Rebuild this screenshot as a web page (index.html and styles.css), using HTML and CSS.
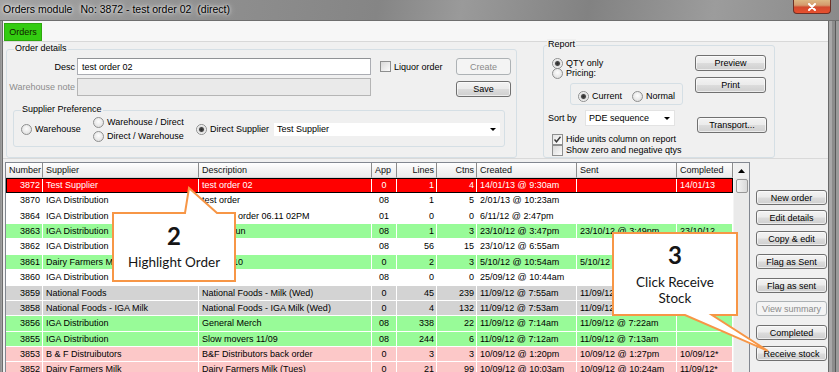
FILE: index.html
```html
<!DOCTYPE html>
<html>
<head>
<meta charset="utf-8">
<title>Orders module</title>
<link rel="stylesheet" href="styles.css">
</head>
<body>
<div class="window">
  <div class="titlebar">
    <span class="title">Orders module</span><span class="title t2">No: 3872 - test order 02</span><span class="title t3">(direct)</span>
    <div class="close"><svg width="8" height="8" viewBox="0 0 8 8"><path d="M1 1 L7 7 M7 1 L1 7" stroke="#fff" stroke-width="2" stroke-linecap="round"/></svg></div>
  </div>
  <div class="frame">
    <div class="frame-left"></div>
    <div class="content">
      <div class="tabstrip"><div class="tab">Orders</div></div>
      <div class="toppanel">
        <div class="grp od">
          <span class="grp-title">Order details</span>
          <div class="od-grid">
            <span class="lbl">Desc</span>
            <div class="input">test order 02</div>
            <div class="chkrow liquor"><span class="chk"></span><span>Liquor order</span></div>
            <div class="btn disabled">Create</div>
            <span class="lbl dim">Warehouse note</span>
            <div class="input disabled"></div>
            <span></span>
            <div class="btn save">Save</div>
          </div>
          <div class="grp sp">
            <span class="grp-title">Supplier Preference</span>
            <div class="sp-row">
              <span class="opt wh"><span class="radio"></span><span>Warehouse</span></span>
              <span class="opt-stack">
                <span class="opt"><span class="radio"></span><span>Warehouse / Direct</span></span>
                <span class="opt"><span class="radio"></span><span>Direct / Warehouse</span></span>
              </span>
              <span class="opt ds"><span class="radio on"></span><span>Direct Supplier</span></span>
              <div class="select sup"><span>Test Supplier</span><span class="caret"></span></div>
            </div>
          </div>
        </div>
        <div class="grp rp">
          <span class="grp-title">Report</span>
          <div class="rp-body">
            <div class="rp-left">
              <span class="opt r1"><span class="radio on"></span><span>QTY only</span></span>
              <span class="opt r2"><span class="radio"></span><span>Pricing:</span></span>
              <div class="inner">
                <span class="opt cur"><span class="radio on"></span><span>Current</span></span>
                <span class="opt"><span class="radio"></span><span>Normal</span></span>
              </div>
              <div class="sortrow"><span class="sortlbl">Sort by</span><div class="select sortsel"><span>PDE sequence</span><span class="caret"></span></div></div>
              <div class="chkrow c1"><span class="chk on"><svg width="9" height="9" viewBox="0 0 9 9"><path d="M1.5 4.5 L3.5 6.8 L7.5 1.8" fill="none" stroke="#3a3a3a" stroke-width="1.4"/></svg></span><span>Hide units column on report</span></div>
              <div class="chkrow c2"><span class="chk"></span><span>Show zero and negative qtys</span></div>
            </div>
            <div class="rp-right">
              <div class="btn preview">Preview</div>
              <div class="btn print">Print</div>
              <div class="btn transport">Transport...</div>
            </div>
          </div>
        </div>
      </div>
      <div class="bottom">
        <div class="listview">
          <div class="lv-body">
            <div class="row head">
              <span class="h">Number</span><span class="h">Supplier</span><span class="h">Description</span><span class="h">App</span><span class="h num">Lines</span><span class="h num">Ctns</span><span class="h">Created</span><span class="h">Sent</span><span class="h">Completed</span>
            </div>
            <div class="row sel"><span class="c num">3872</span><span class="c">Test Supplier</span><span class="c">test order 02</span><span class="c ctr">0</span><span class="c num">1</span><span class="c num">4</span><span class="c">14/01/13 @ 9:30am</span><span class="c"></span><span class="c">14/01/13</span></div>
            <div class="row"><span class="c num">3870</span><span class="c">IGA Distribution</span><span class="c">test order</span><span class="c ctr">08</span><span class="c num">1</span><span class="c num">5</span><span class="c">2/01/13 @ 10:23am</span><span class="c"></span><span class="c"></span></div>
            <div class="row"><span class="c num">3864</span><span class="c">IGA Distribution</span><span class="c">Produce order 06.11 02PM</span><span class="c ctr">01</span><span class="c num">0</span><span class="c num">0</span><span class="c">6/11/12 @ 2:47pm</span><span class="c"></span><span class="c"></span></div>
            <div class="row green"><span class="c num">3863</span><span class="c">IGA Distribution</span><span class="c">Frozen run</span><span class="c ctr">08</span><span class="c num">1</span><span class="c num">3</span><span class="c">23/10/12 @ 3:47pm</span><span class="c">23/10/12 @ 3:49pm</span><span class="c">23/10/12</span></div>
            <div class="row"><span class="c num">3862</span><span class="c">IGA Distribution</span><span class="c">Milk</span><span class="c ctr">08</span><span class="c num">56</span><span class="c num">15</span><span class="c">23/10/12 @ 6:55am</span><span class="c"></span><span class="c"></span></div>
            <div class="row green"><span class="c num">3861</span><span class="c">Dairy Farmers Milk</span><span class="c">Milk 05/10</span><span class="c ctr">0</span><span class="c num">2</span><span class="c num">3</span><span class="c">5/10/12 @ 10:54am</span><span class="c">5/10/12 @ 11:02am</span><span class="c">5/10/12</span></div>
            <div class="row"><span class="c num">3860</span><span class="c">IGA Distribution</span><span class="c">Bread</span><span class="c ctr">08</span><span class="c num">0</span><span class="c num">0</span><span class="c">25/09/12 @ 10:44am</span><span class="c"></span><span class="c"></span></div>
            <div class="row gray"><span class="c num">3859</span><span class="c">National Foods</span><span class="c">National Foods - Milk (Wed)</span><span class="c ctr">0</span><span class="c num">45</span><span class="c num">239</span><span class="c">11/09/12 @ 7:55am</span><span class="c">11/09/12 @ 8:01am</span><span class="c">11/09/12</span></div>
            <div class="row gray"><span class="c num">3858</span><span class="c">National Foods - IGA Milk</span><span class="c">National Foods - IGA Milk (Wed)</span><span class="c ctr">0</span><span class="c num">4</span><span class="c num">132</span><span class="c">11/09/12 @ 7:53am</span><span class="c">11/09/12 @ 8:00am</span><span class="c">11/09/12</span></div>
            <div class="row green"><span class="c num">3856</span><span class="c">IGA Distribution</span><span class="c">General Merch</span><span class="c ctr">08</span><span class="c num">338</span><span class="c num">22</span><span class="c">11/09/12 @ 7:14am</span><span class="c">11/09/12 @ 7:22am</span><span class="c"></span></div>
            <div class="row green"><span class="c num">3855</span><span class="c">IGA Distribution</span><span class="c">Slow movers 11/09</span><span class="c ctr">08</span><span class="c num">244</span><span class="c num">6</span><span class="c">11/09/12 @ 7:12am</span><span class="c">11/09/12 @ 7:13am</span><span class="c"></span></div>
            <div class="row pink"><span class="c num">3853</span><span class="c">B &amp; F Distruibutors</span><span class="c">B&amp;F Distributors back order</span><span class="c ctr">0</span><span class="c num">3</span><span class="c num">3</span><span class="c">10/09/12 @ 1:20pm</span><span class="c">10/09/12 @ 1:27pm</span><span class="c">10/09/12*</span></div>
            <div class="row pink"><span class="c num">3852</span><span class="c">Dairy Farmers Milk</span><span class="c">Dairy Farmers Milk (Tues)</span><span class="c ctr">0</span><span class="c num">21</span><span class="c num">99</span><span class="c">10/09/12 @ 10:03am</span><span class="c">10/09/12 @ 10:24am</span><span class="c">11/09/12*</span></div>
          </div>
          <div class="vscroll">
            <div class="sb-up"><svg width="7" height="4" viewBox="0 0 7 4"><path d="M0 4 L3.5 0 L7 4 Z" fill="#000"/></svg></div>
            <div class="sb-thumb"></div>
          </div>
        </div>
        <div class="side">
          <div class="btn sb b1">New order</div>
          <div class="btn sb b2">Edit details</div>
          <div class="btn sb b3">Copy &amp; edit</div>
          <div class="btn sb b4">Flag as Sent</div>
          <div class="btn sb b5">Flag as sent</div>
          <div class="btn sb b6 disabled">View summary</div>
          <div class="btn sb b7">Completed</div>
          <div class="btn sb b8">Receive stock</div>
        </div>
      </div>
    </div>
    <div class="frame-right"></div>
  </div>

  <svg class="callouts" width="839" height="372" viewBox="0 0 839 372">
    <path d="M113 213 L185 213 L189 188 L217 213 L235 213 L235 281 L113 281 Z" fill="#fff" stroke="#f79646" stroke-width="2" stroke-linejoin="miter"/>
    <path d="M613 233 L737 233 L737 315 L712 315 L768 351 L685 315 L613 315 Z" fill="#fff" stroke="#f79646" stroke-width="2" stroke-linejoin="miter"/>
  </svg>
  <div class="ctext ct2"><span class="big">2</span><span class="small">Highlight Order</span></div>
  <div class="ctext ct3"><span class="big">3</span><span class="small">Click Receive<br>Stock</span></div>
</div>
</body>
</html>
```

FILE: styles.css
```css
* { box-sizing: border-box; }
body { margin: 0; background: #f0f0f0; }

.window {
  width: 839px; height: 372px; overflow: hidden; position: relative;
  background: #f0f0f0;
  font-family: "Liberation Sans", Arial, sans-serif; font-size: 9px; color: #000;
}

/* title bar */
.titlebar {
  height: 21px; display: flex; align-items: flex-start;
  background: linear-gradient(100deg, #a3a3a3 0%, #8f8f8f 25%, #858585 45%, #9a9a9a 55%, #828282 70%, #9c9c9c 85%, #8a8a8a 100%);
  border-bottom: 1px solid #6f6f6f;
}
.title {
  font-size: 10.5px; line-height: 18px; margin-left: 3px; color: #000;
  text-shadow: 0 0 6px #fff, 0 0 3px rgba(255,255,255,0.8);
}
.t2 { margin-left: 8px; }
.t3 { margin-left: 6px; }
.close {
  margin-left: auto; margin-right: 8px; width: 38px; height: 14px;
  border: 1px solid #6b3026; border-top: none; border-radius: 0 0 4px 4px;
  background: linear-gradient(#dcb884 0%, #d49a6c 40%, #d24a2e 55%, #e8502e 100%);
  display: flex; align-items: center; justify-content: center;
}

.frame { display: flex; height: 351px; }
.frame-left { width: 3px; background: linear-gradient(to right, #8a8a8a, #a8a8a8 2px, #6d6d6d 2px); }
.frame-right { width: 11px; background: linear-gradient(to right, #6a6a6a 0 1px, #a8a8a8 1px 4px, #8c8c8c 4px 7px, #5a5a5a 7px 8px, #9b9b9b 8px); }
.content { width: 825px; display: flex; flex-direction: column; }

/* tabs */
.tabstrip {
  height: 21px; background: #f7f7f7; border-bottom: 1px solid #d8d8d8;
  padding: 2px 0 0 1px;
}
.tab {
  width: 38px; height: 18px; background: #33cc11; border: 1px solid #2ea80e;
  display: flex; align-items: center; justify-content: center; color: #112200;
}

/* top panel */
.toppanel {
  height: 119px; display: flex; align-items: flex-start;
  border-bottom: 1px solid #d9d9d9;
}
.grp { border: 1px solid #d5dfe5; border-radius: 3px; }
.grp-title {
  display: block; width: max-content; margin: -7px 0 0 7px; padding: 0 1px;
  line-height: 11px; background: #f0f0f0;
}
.od { margin: 7px 0 0 3px; width: 511px; height: 109px; }
.od-grid {
  margin-top: 4px; display: grid;
  grid-template-columns: 70px 294px 85px 55px;
  grid-template-rows: 17px 18px; row-gap: 3px;
}
.lbl { text-align: right; padding-right: 2px; align-self: center; white-space: nowrap; }
.dim { color: #8d8d8d; }
.input {
  border: 1px solid #abadb3; border-top-color: #8f9295; background: #fff;
  padding-left: 4px; display: flex; align-items: center;
}
.input.disabled { background: #eaeaea; border-color: #b5b5b5; }
.chkrow { display: flex; align-items: center; gap: 3px; white-space: nowrap; }
.liquor { padding-left: 9px; }
.chk {
  width: 11px; height: 11px; flex: none; border: 1px solid #8e8f8f;
  background: linear-gradient(135deg, #d9d9d9, #fbfbfb);
  display: flex; align-items: center; justify-content: center;
}
.chk.on { background: linear-gradient(135deg, #e4e4e4, #fff); }
.radio {
  width: 11px; height: 11px; flex: none; border-radius: 50%;
  border: 1px solid #8e8f8f;
  background: radial-gradient(circle at 50% 40%, #fdfdfd 0, #e2e2e2 75%);
}
.radio.on { background: radial-gradient(circle at 50% 50%, #2a2a2a 0, #4a4a4a 2px, #dcdcdc 3px, #fafafa 4.5px); }
.opt { display: flex; align-items: center; gap: 3px; white-space: nowrap; }

.btn {
  border: 1px solid #707070; border-radius: 3px;
  background: linear-gradient(#f3f3f3 0%, #ebebeb 48%, #dcdcdc 52%, #cfcfcf 100%);
  box-shadow: inset 0 0 0 1px rgba(255,255,255,0.6);
  display: flex; align-items: center; justify-content: center; white-space: nowrap;
}
.btn.disabled { border-color: #adb2b5; background: #f4f4f4; color: #8a8a8a; box-shadow: none; }
.save { margin-top: 3px; height: 16px; }

.sp { margin: 14px 0 0 6px; width: 492px; }
.sp-row { height: 28px; display: flex; align-items: center; padding-left: 7px; margin-bottom: 3px; }
.wh { width: 72px; }
.opt-stack { width: 103px; display: flex; flex-direction: column; }
.opt-stack .opt { height: 14px; }
.ds { width: 77px; }
.select {
  background: #fff; border: 1px solid #f0f0f0;
  display: flex; align-items: center; padding-left: 3px; white-space: nowrap;
}
.caret {
  margin-left: auto; margin-right: 4px; width: 0; height: 0;
  border-left: 3px solid transparent; border-right: 3px solid transparent; border-top: 3px solid #000;
}
.sup { width: 228px; height: 15px; }

/* report */
.rp { margin: 3px 0 0 26px; width: 232px; height: 113px; }
.rp .grp-title { margin-left: 3px; }
.rp-body { display: flex; padding-left: 4px; }
.rp-left { width: 147px; display: flex; flex-direction: column; align-items: flex-start; }
.r1 { margin: 8px 0 0 4px; height: 10px; }
.r2 { margin-left: 4px; height: 10px; }
.inner {
  margin: 5px 0 0 22px; width: 113px; height: 22px;
  border: 1px solid #d5dfe5; border-radius: 3px;
  padding: 6px 0 0 7px; display: flex;
}
.inner .opt { height: 12px; }
.cur { width: 54px; }
.sortrow { margin-top: 5px; height: 16px; display: flex; align-items: center; }
.sortlbl { width: 37px; }
.sortsel { width: 90px; height: 16px; border-color: #e3e3e3; }
.c1 { margin: 8px 0 0 4px; height: 10px; }
.c2 { margin: 1px 0 0 4px; height: 10px; }
.rp-right { width: 72px; display: flex; flex-direction: column; }
.preview { margin-top: 5px; width: 71px; height: 16px; }
.print { margin-top: 6px; width: 71px; height: 16px; }
.transport { margin: 24px 0 0 2px; width: 70px; height: 16px; }

/* list */
.bottom { flex: 1; display: flex; align-items: flex-start; }
.listview {
  margin: 3px 0 0 2px; height: 220px; display: flex;
  border: 1px solid #828790; border-bottom: none; background: #fff;
}
.lv-body { width: 727px; }
.row {
  display: grid; height: 15.36px;
  grid-template-columns: 37px 156px 173px 25px 40px 40px 100px 100px 56px;
}
.row .c {
  border-right: 1px solid #fff; border-bottom: 1px solid #fff;
  padding: 0 2px 0 3px; line-height: 14px; white-space: nowrap; overflow: hidden;
}
.row .num { text-align: right; padding-right: 2px; }
.row .ctr { text-align: center; padding: 0; }
.row.head { height: 15px; }
.h {
  background: linear-gradient(#ffffff, #f3f3f3 50%, #ebebeb);
  border-right: 1px solid #8c8c8c; border-bottom: 1px solid #d5d5d5;
  line-height: 14px; padding: 0 2px 0 3px; white-space: nowrap; overflow: hidden; color: #111;
}
.h.num { text-align: right; }
.sel { background: #ff0000; color: #fff; outline: 1px solid #000; outline-offset: -1px; }
.green { background: #98fb98; }
.gray { background: #d3d3d3; }
.pink { background: #fcc8c8; }

.vscroll { width: 16px; background: #eaeaea; border-left: 1px solid #f4f4f4; }
.sb-up {
  height: 15px; display: flex; align-items: center; justify-content: center;
  background: #f0f0f0;
}
.sb-thumb {
  margin: 1px 1px 0 2px; height: 14px;
  border: 1px solid #979797; border-radius: 2px;
  background: linear-gradient(to right, #f3f3f3, #e6e6e6 50%, #d9d9d9);
}

/* side buttons */
.side { width: 78px; padding-left: 6px; display: flex; flex-direction: column; }
.sb { width: 71px; height: 15px; }
.b1 { margin-top: 31px; }
.b2 { margin-top: 5px; }
.b3 { margin-top: 6px; }
.b4 { margin-top: 8px; }
.b5 { margin-top: 9px; }
.b6 { margin-top: 8px; }
.b7 { margin-top: 9px; }
.b8 { margin-top: 6px; }

/* callouts */
.callouts { position: absolute; left: 0; top: 0; pointer-events: none; }
.ctext {
  position: absolute; display: flex; flex-direction: column; align-items: center;
  font-family: Lato, "Open Sans", sans-serif; color: #151515; text-align: center;
}
.ct2 { left: 113px; top: 213px; width: 122px; height: 68px; padding-top: 11px; }
.ct3 { left: 613px; top: 233px; width: 124px; height: 82px; padding-top: 10px; }
.big { font-size: 24px; font-weight: 700; line-height: 24px; }
.small { font-size: 13.5px; line-height: 16px; margin-top: 6px; }
.ct3 .small { margin-top: 7px; }
```
